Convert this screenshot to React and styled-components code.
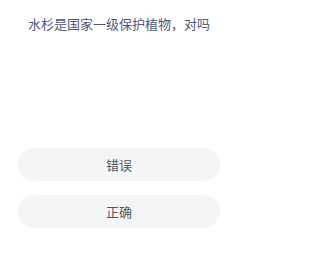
import React from "react";
import styled, { createGlobalStyle } from "styled-components";

const Global = createGlobalStyle`
  html, body { margin: 0; padding: 0; background: #ffffff; }
  body { font-family: "Noto Sans CJK SC", "Noto Sans", sans-serif; }
`;

const Page = styled.div`
  width: 238px;
  height: 268px;
  box-sizing: border-box;
  padding: 15px 18px 0;
  display: flex;
  flex-direction: column;
`;

const Question = styled.div`
  font-size: 13px;
  line-height: 17px;
  color: #4d5878;
  text-align: center;
  white-space: nowrap;
`;

const Options = styled.div`
  margin-top: 116px;
  display: flex;
  flex-direction: column;
  gap: 14px;
`;

const Option = styled.div`
  height: 33px;
  border-radius: 16.5px;
  background: #f4f5f7;
  display: flex;
  align-items: center;
  justify-content: center;
  font-size: 13px;
  color: #4f5663;
`;

export default function App() {
  return (
    <>
      <Global />
      <Page>
        <Question>水杉是国家一级保护植物，对吗</Question>
        <Options>
          <Option>错误</Option>
          <Option>正确</Option>
        </Options>
      </Page>
    </>
  );
}
